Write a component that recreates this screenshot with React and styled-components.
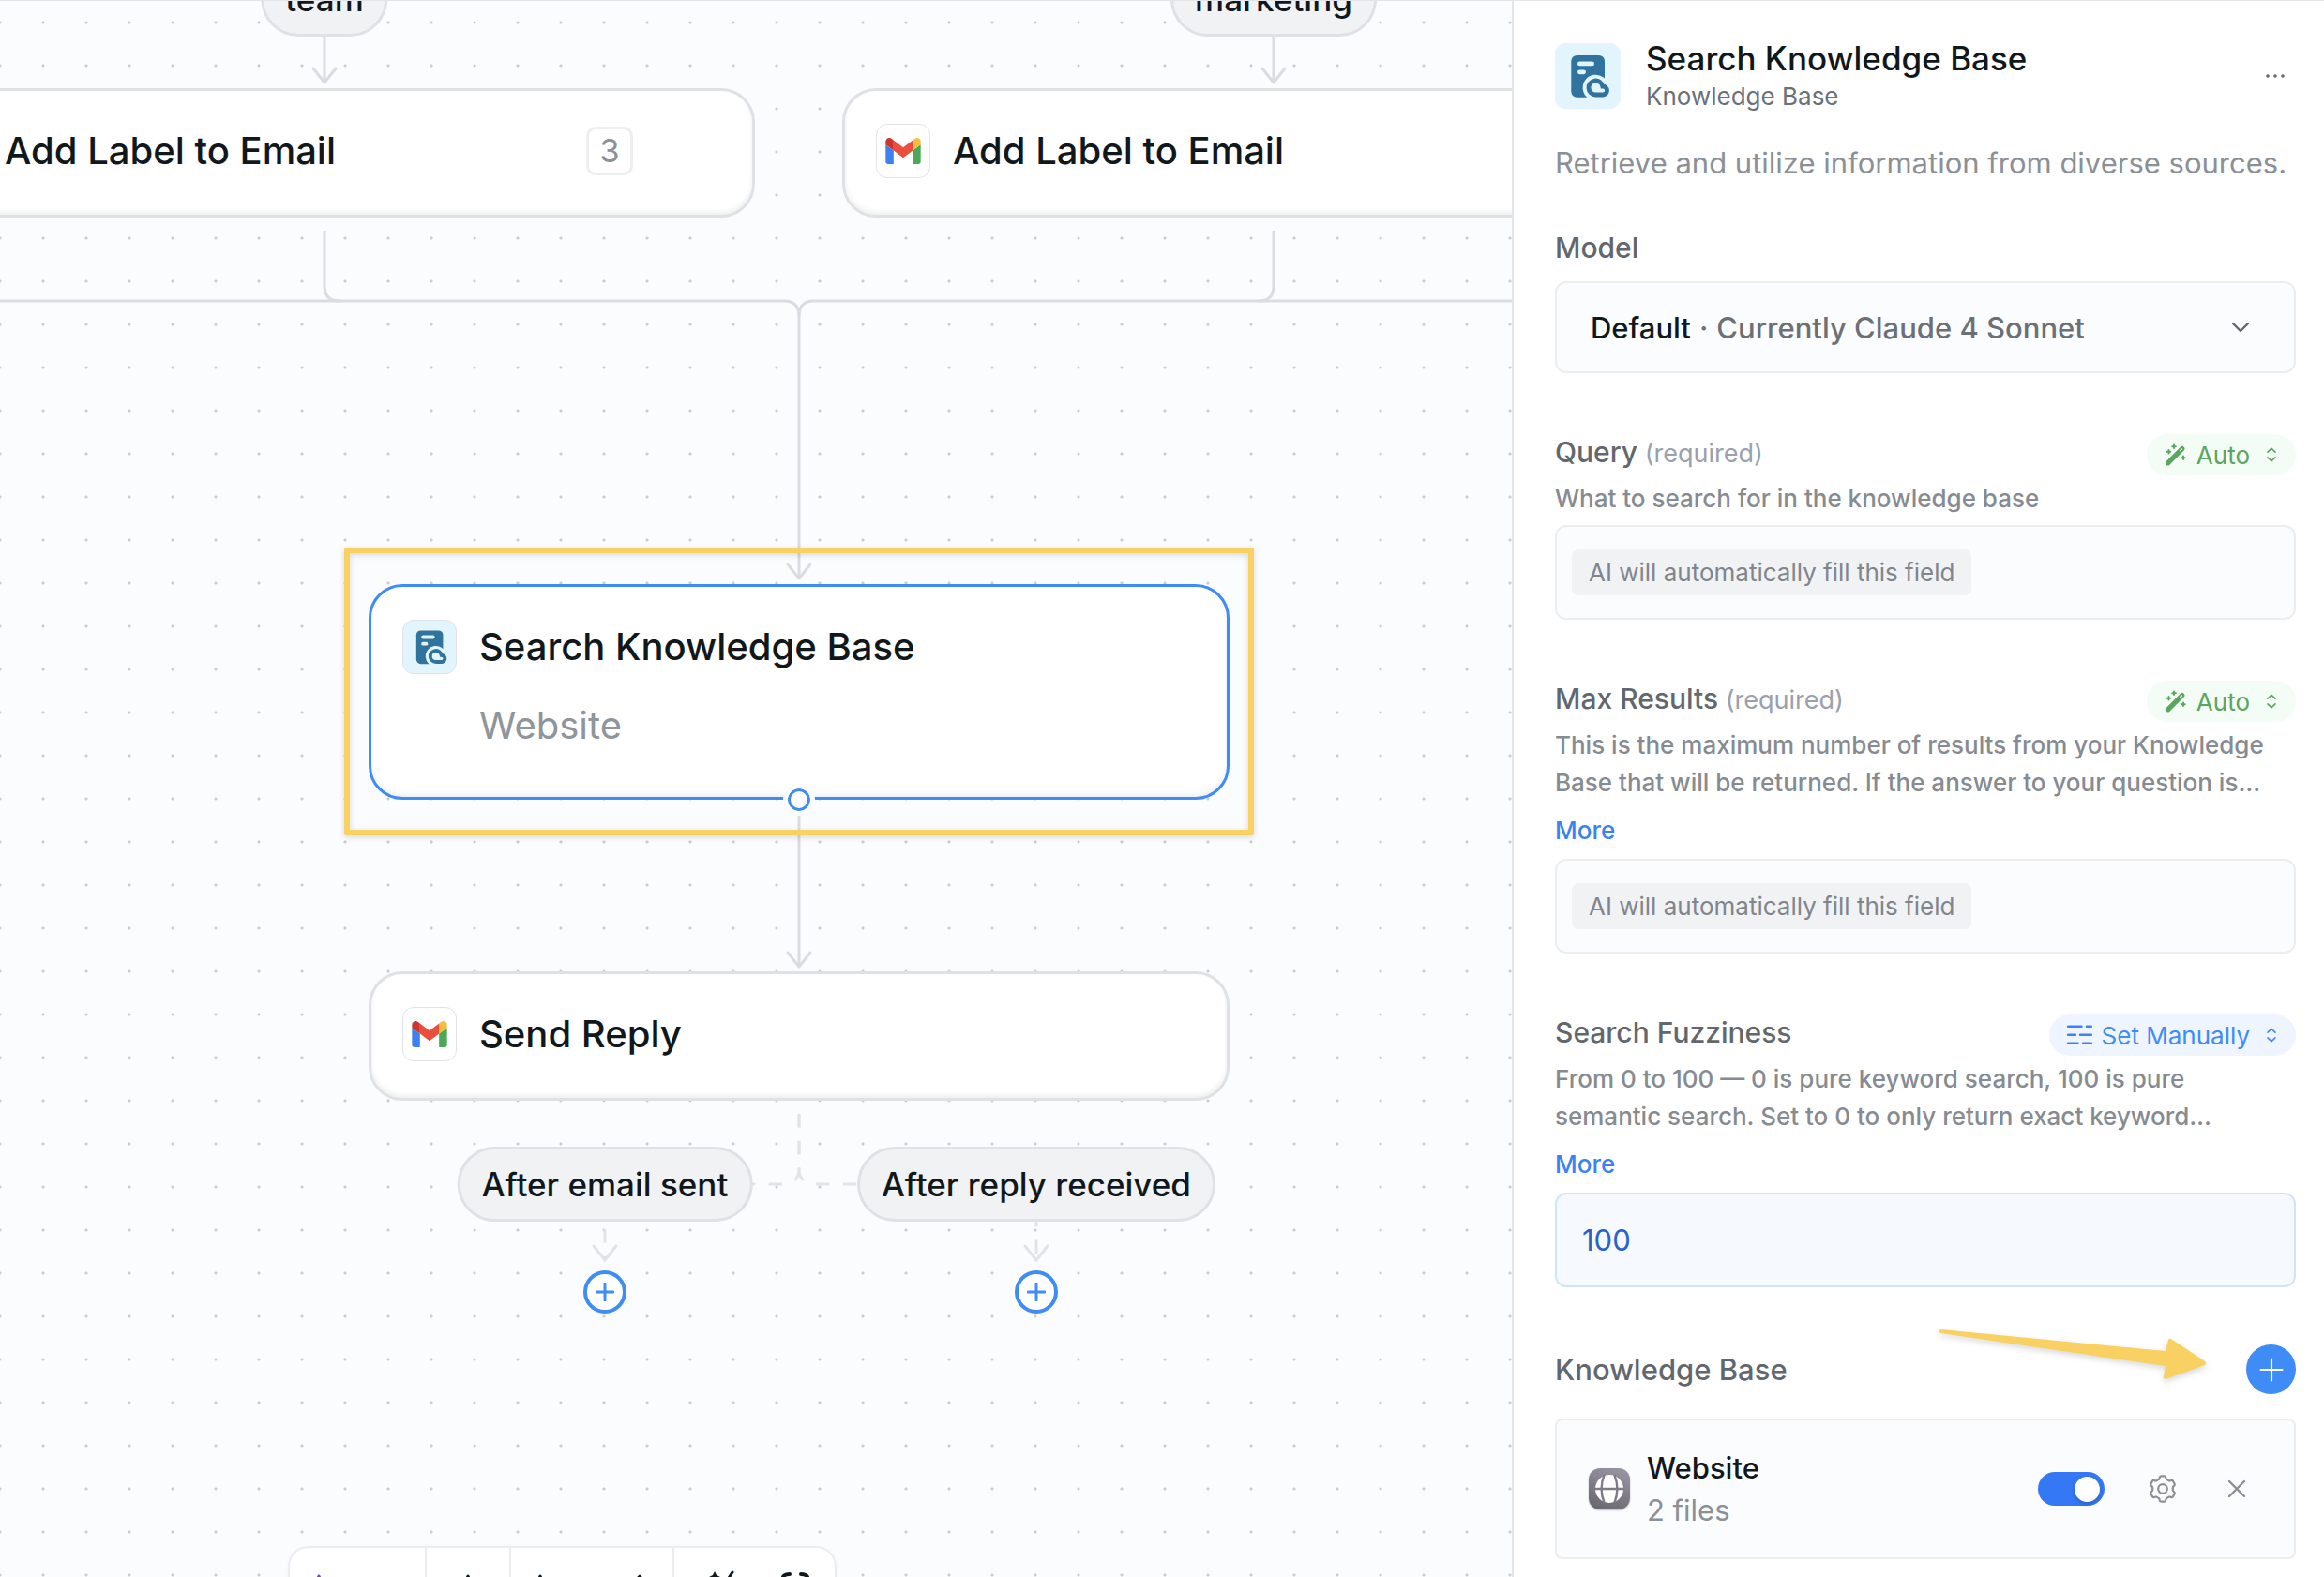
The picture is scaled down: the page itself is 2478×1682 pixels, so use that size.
import React, { useState } from 'react';
import styled, { createGlobalStyle } from 'styled-components';

const GlobalStyle = createGlobalStyle`
  * {
    box-sizing: border-box;
  }
  body {
    margin: 0;
    background: #fff;
    color: #11181c;
    font-family: Inter, "Liberation Sans", sans-serif;
  }
  button, input, select {
    font: inherit;
    color: inherit;
  }
`;

/* ---------- icons ---------- */

function GmailIcon() {
  return (
    <svg width="38" height="28" viewBox="52 42 88 66" aria-hidden="true">
      <path fill="#3b82f0" d="M58 108h14V74L52 59v43c0 3.32 2.69 6 6 6" />
      <path fill="#4aa856" d="M120 108h14c3.32 0 6-2.69 6-6V59l-20 15" />
      <path fill="#f5be41" d="M120 48v26l20-15v-8c0-7.42-8.47-11.65-14.4-7.2" />
      <path fill="#ea4f3d" d="M72 74V48l24 18 24-18v26L96 92" />
      <path fill="#cf352b" d="M52 51v8l20 15V48l-5.6-4.2c-5.94-4.45-14.4-.22-14.4 7.2" />
    </svg>
  );
}

function KnowledgeIcon({ size }) {
  const cloud = 'M43.5 55H51.2A4.5 4.5 0 0 0 50.8 46A7.5 7.5 0 1 0 43.5 55Z';
  return (
    <svg width={size} height={size} viewBox="0 0 70 70" aria-hidden="true">
      <rect x="17.3" y="13" width="35.7" height="44.7" rx="6" fill="#30739f" />
      <rect x="24" y="19.5" width="18" height="4.8" rx="2.4" fill="#e3f5fc" />
      <rect x="24" y="28.4" width="9" height="4.8" rx="2.4" fill="#e3f5fc" />
      <path d={cloud} fill="#e3f5fc" stroke="#e3f5fc" strokeWidth="12.6" />
      <path d={cloud} fill="#e3f5fc" stroke="#30739f" strokeWidth="4.8" />
    </svg>
  );
}

function WandIcon() {
  return (
    <svg width="24" height="24" viewBox="0 0 24 24" fill="none" strokeLinecap="round" aria-hidden="true">
      <path d="M3.6 20.8L18.8 5.6" stroke="#5ba561" strokeWidth="5.2" />
      <path d="M16.8 7.6L18.4 6" stroke="#f3fcf5" strokeWidth="1.4" />
      <path
        d="M4.5 6.9v3.6M2.7 8.7h3.6M10 1.5v3.6M8.2 3.3h3.6M20 13.5v3.6M18.2 15.3h3.6"
        stroke="#5ba561"
        strokeWidth="1.9"
      />
    </svg>
  );
}

function ManualIcon() {
  return (
    <svg width="27" height="22" viewBox="0 0 27 22" fill="none" aria-hidden="true">
      <path
        d="M1 1.7H15.5M21 1.7H26M1 10.8H9M14 10.8H26M1 19.8H11.5M17 19.8H26"
        stroke="#3a82f6"
        strokeWidth="2.4"
        strokeLinecap="round"
      />
    </svg>
  );
}

function SortIcon() {
  return (
    <svg width="10" height="16" viewBox="0 0 10 16" fill="none" aria-hidden="true">
      <path
        d="M1 5.2L5 1.4L9 5.2M1 10.8L5 14.6L9 10.8"
        stroke="currentColor"
        strokeWidth="1.6"
        strokeLinecap="round"
        strokeLinejoin="round"
      />
    </svg>
  );
}

function ChevronIcon() {
  return (
    <svg width="20" height="12" viewBox="0 0 20 12" fill="none" aria-hidden="true">
      <path d="M2 2L10 10L18 2" stroke="#62676e" strokeWidth="2.4" strokeLinecap="round" strokeLinejoin="round" />
    </svg>
  );
}

function PlusIcon({ size, weight }) {
  return (
    <svg width={size} height={size} viewBox="0 0 24 24" fill="none" aria-hidden="true">
      <path d="M12 1.5v21M1.5 12h21" stroke="currentColor" strokeWidth={weight} strokeLinecap="round" />
    </svg>
  );
}

function DotsIcon() {
  return (
    <svg width="24" height="8" viewBox="0 0 24 8" fill="#62676e" aria-hidden="true">
      <circle cx="4" cy="4" r="1.8" />
      <circle cx="12" cy="4" r="1.8" />
      <circle cx="20" cy="4" r="1.8" />
    </svg>
  );
}

function GlobeIcon() {
  return (
    <svg width="32" height="32" viewBox="0 0 32 32" fill="none" aria-hidden="true">
      <circle cx="16" cy="16" r="15" fill="#fff" />
      <path
        d="M0 16H32M10.6 1C6.6 11 6.6 21 10.6 31M21.4 1C25.4 11 25.4 21 21.4 31"
        stroke="#7f7b86"
        strokeWidth="2.4"
      />
    </svg>
  );
}

const gearPath = (() => {
  const at = (deg, r) => {
    const rad = (deg * Math.PI) / 180;
    return `${(15 + r * Math.cos(rad)).toFixed(2)} ${(15 + r * Math.sin(rad)).toFixed(2)}`;
  };
  let d = '';
  for (let i = 0; i < 6; i += 1) {
    const a = i * 60 - 90;
    d += `${i ? 'L' : 'M'}${at(a - 22, 10.9)}Q${at(a - 17, 11.4)} ${at(a - 15, 12.6)}`;
    d += `Q${at(a - 13, 13.8)} ${at(a - 7, 13.7)}L${at(a + 7, 13.7)}`;
    d += `Q${at(a + 13, 13.8)} ${at(a + 15, 12.6)}Q${at(a + 17, 11.4)} ${at(a + 22, 10.9)}`;
  }
  return `${d}Z`;
})();

function GearIcon() {
  return (
    <svg width="30" height="30" viewBox="0 0 30 30" fill="none" stroke="#8b9096" strokeWidth="2.2" strokeLinejoin="round" aria-hidden="true">
      <path d={gearPath} />
      <circle cx="15" cy="15" r="4.8" />
    </svg>
  );
}

function CloseIcon() {
  return (
    <svg width="20" height="20" viewBox="0 0 20 20" fill="none" aria-hidden="true">
      <path d="M2 2L18 18M18 2L2 18" stroke="#8b9096" strokeWidth="2.4" strokeLinecap="round" />
    </svg>
  );
}

function StarIcon({ color }) {
  return (
    <svg width="30" height="30" viewBox="0 0 30 30" aria-hidden="true">
      <path
        d="M15 2L19 11L28 15L19 19L15 28L11 19L2 15L11 11Z"
        fill={color}
        stroke={color}
        strokeWidth="3"
        strokeLinejoin="round"
      />
    </svg>
  );
}

function TidyIcon() {
  return (
    <svg width="34" height="34" viewBox="0 0 34 34" aria-hidden="true">
      <path d="M9 1L11 5L15 7L11 9L9 13L7 9L3 7L7 5Z" fill="#11181c" />
      <path d="M28 2L8 32" stroke="#11181c" strokeWidth="3" strokeLinecap="round" />
    </svg>
  );
}

function FitIcon() {
  return (
    <svg width="36" height="36" viewBox="0 0 36 36" fill="none" aria-hidden="true">
      <path
        d="M12 4C6 4 4 6 4 13M24 4C30 4 32 6 32 13M4 23C4 30 6 32 12 32M32 23C32 30 30 32 24 32"
        stroke="#11181c"
        strokeWidth="4"
        strokeLinecap="round"
      />
    </svg>
  );
}

/* ---------- flow canvas ---------- */

const solidEdges = [
  'M346 38V86',
  'M1358 38V86',
  'M346 245V304Q346 320 362 320',
  'M1358 245V304Q1358 320 1342 320',
  'M0 320H836Q852 320 852 336V614',
  'M1614 320H868Q852 320 852 336',
  'M852 868V1028',
];

const arrowHeads = [
  [346, 87],
  [1358, 87],
  [852, 616],
  [852, 1030],
];

const dashedEdges = [
  'M852 1187V1247A15 15 0 0 1 837 1262H660A15 15 0 0 0 645 1277V1341',
  'M852 1187V1247A15 15 0 0 0 867 1262H1090A15 15 0 0 1 1105 1277V1341',
];

const dashedHeads = [
  [645, 1343],
  [1105, 1343],
];

const headPath = ([x, y]) => `M${x - 12} ${y - 15}L${x} ${y}L${x + 12} ${y - 15}`;

function Edges() {
  return (
    <EdgeLayer aria-hidden="true">
      <g stroke="#dadce1" strokeWidth="3" fill="none" strokeLinejoin="round">
        {solidEdges.map((d) => <path key={d} d={d} />)}
        {arrowHeads.map((p) => <path key={p.join()} d={headPath(p)} strokeLinecap="round" />)}
      </g>
      <g stroke="#e1e3e6" strokeWidth="3" fill="none">
        {dashedEdges.map((d) => <path key={d} d={d} strokeDasharray="14.4 14.4" />)}
        {dashedHeads.map((p) => <path key={p.join()} d={headPath(p)} strokeLinecap="round" />)}
      </g>
    </EdgeLayer>
  );
}

function FlowNode({ x, y, title, subtitle, icon = 'gmail', count, selected }) {
  return (
    <Node $x={x} $y={y} $selected={selected}>
      <NodeIcon $tinted={icon === 'kb'}>
        {icon === 'kb' ? <KnowledgeIcon size={56} /> : <GmailIcon />}
      </NodeIcon>
      <NodeText>
        <NodeTitle>{title}</NodeTitle>
        {subtitle && <NodeSubtitle>{subtitle}</NodeSubtitle>}
      </NodeText>
      {count && <Count>{count}</Count>}
      {selected && <Handle />}
    </Node>
  );
}

function Canvas() {
  return (
    <Board>
      <Edges />
      <Branch $x={346} $y={-42}>team</Branch>
      <Branch $x={1358} $y={-42}>marketing</Branch>
      <FlowNode x={-113} y={93} title="Add Label to Email" count="3" />
      <FlowNode x={898} y={93} title="Add Label to Email" />
      <FlowNode x={393} y={622} title="Search Knowledge Base" subtitle="Website" icon="kb" selected />
      <Highlight />
      <FlowNode x={393} y={1035} title="Send Reply" />
      <Branch $x={645} $y={1222}>After email sent</Branch>
      <Branch $x={1105} $y={1222}>After reply received</Branch>
      <AddStep $x={645} aria-label="Add step after email sent"><PlusIcon size={20} weight={3.6} /></AddStep>
      <AddStep $x={1105} aria-label="Add step after reply received"><PlusIcon size={20} weight={3.6} /></AddStep>
      <Toolbar>
        <Tool $width={146} aria-label="Assistant"><StarIcon color="#7c3fc4" /></Tool>
        <Tool $width={90} $align="center" aria-label="Move up"><StarIcon color="#11181c" /></Tool>
        <Tool $width={174} $align="space-between" aria-label="Zoom level">
          <StarIcon color="#11181c" />
          <SortIcon />
        </Tool>
        <ToolPair>
          <IconButton aria-label="Tidy up"><TidyIcon /></IconButton>
          <IconButton aria-label="Fit to screen"><FitIcon /></IconButton>
        </ToolPair>
      </Toolbar>
    </Board>
  );
}

/* ---------- side panel ---------- */

function ModeSelect({ field, mode }) {
  const manual = mode === 'Set Manually';
  return (
    <ModePill $manual={manual}>
      {manual ? <ManualIcon /> : <WandIcon />}
      <PlainSelect aria-label={`${field} mode`} defaultValue={mode}>
        <option>Auto</option>
        <option>Set Manually</option>
      </PlainSelect>
      <SortIcon />
    </ModePill>
  );
}

function FieldSection({ id, label, required, mode, help, more, children }) {
  return (
    <Section>
      <FieldHead>
        <Label htmlFor={id}>
          {label}
          {required && <Required> (required)</Required>}
        </Label>
        <ModeSelect field={label} mode={mode} />
      </FieldHead>
      <FieldBody>
        <Help>{help}</Help>
        {more && <More href="#more">More</More>}
        {children}
      </FieldBody>
    </Section>
  );
}

function Panel() {
  const [fuzziness, setFuzziness] = useState('100');
  const [enabled, setEnabled] = useState(true);

  return (
    <Side>
      <PanelHead>
        <PanelIcon><KnowledgeIcon size={70} /></PanelIcon>
        <PanelTitles>
          <PanelTitle>Search Knowledge Base</PanelTitle>
          <PanelSubtitle>Knowledge Base</PanelSubtitle>
        </PanelTitles>
        <IconButton aria-label="More options"><DotsIcon /></IconButton>
      </PanelHead>
      <Intro>Retrieve and utilize information from diverse sources.</Intro>

      <ModelSection>
        <Label htmlFor="model">Model</Label>
        <ModelBox>
          <strong>Default</strong>
          <span>·</span>
          <ModelSelect id="model">
            <option>Currently Claude 4 Sonnet</option>
          </ModelSelect>
          <ChevronIcon />
        </ModelBox>
      </ModelSection>

      <FieldSection id="query" label="Query" required mode="Auto" help="What to search for in the knowledge base">
        <AutoBox><AutoInput id="query" readOnly value="AI will automatically fill this field" /></AutoBox>
      </FieldSection>

      <FieldSection
        id="max"
        label="Max Results"
        required
        mode="Auto"
        more
        help={<>This is the maximum number of results from your Knowledge<br />Base that will be returned. If the answer to your question is…</>}
      >
        <AutoBox><AutoInput id="max" readOnly value="AI will automatically fill this field" /></AutoBox>
      </FieldSection>

      <FieldSection
        id="fuzziness"
        label="Search Fuzziness"
        mode="Set Manually"
        more
        help={<>From 0 to 100 — 0 is pure keyword search, 100 is pure<br />semantic search. Set to 0 to only return exact keyword…</>}
      >
        <NumberInput id="fuzziness" value={fuzziness} onChange={(e) => setFuzziness(e.target.value)} />
      </FieldSection>

      <SourcesHead>
        <SourcesTitle>Knowledge Base</SourcesTitle>
        <AddSource aria-label="Add knowledge base"><PlusIcon size={26} weight={2} /></AddSource>
        <Pointer viewBox="0 0 300 70" aria-hidden="true">
          <path
            d="M9 8L249 31L252 19Q253 17 255 18L291 42Q293 44 291 46L249 61Q246 61 247 58L249 47L9 12Q6 10 9 8Z"
            fill="#f8d162"
          />
        </Pointer>
      </SourcesHead>
      <Source>
        <SourceIcon><GlobeIcon /></SourceIcon>
        <SourceText>
          <SourceName htmlFor="website">Website</SourceName>
          <SourceMeta>2 files</SourceMeta>
        </SourceText>
        <Switch
          id="website"
          type="checkbox"
          role="switch"
          checked={enabled}
          onChange={(e) => setEnabled(e.target.checked)}
        />
        <SourceAction aria-label="Website settings"><GearIcon /></SourceAction>
        <SourceAction aria-label="Remove Website"><CloseIcon /></SourceAction>
      </Source>
    </Side>
  );
}

export default function App() {
  return (
    <Page>
      <GlobalStyle />
      <Canvas />
      <Panel />
    </Page>
  );
}

const Page = styled.div`
  display: flex;
  min-height: 100vh;
  border-top: 1px solid #e2e4e8;
`;

const Board = styled.main`
  position: relative;
  flex: 1;
  min-width: 0;
  overflow: hidden;
  background-color: #fbfcfe;
  background-image: radial-gradient(circle, #c9ccd1 1px, transparent 2px);
  background-size: 46px 46px;
  background-position: -23px 0;
`;

const EdgeLayer = styled.svg`
  position: absolute;
  inset: 0;
  width: 100%;
  height: 100%;
`;

const Node = styled.article`
  position: absolute;
  left: ${(p) => p.$x}px;
  top: ${(p) => p.$y}px;
  width: 918px;
  display: flex;
  align-items: flex-start;
  gap: 24px;
  padding: ${(p) => (p.$selected ? '34px 33px 46px' : '34px 33px 38px')};
  border: 3px solid ${(p) => (p.$selected ? '#3f8cf5' : '#dfe1e5')};
  border-radius: 36px;
  background: #fff;
  box-shadow: inset 0 -3px 5px rgba(17, 24, 28, 0.07);
`;

const NodeIcon = styled.div`
  display: grid;
  place-items: center;
  flex: none;
  width: 58px;
  height: 58px;
  margin: 1px 0;
  border: 1px solid #e0e3e7;
  border-radius: 12px;
  background: ${(p) => (p.$tinted ? '#e3f5fc' : '#fff')};
  overflow: hidden;
`;

const NodeText = styled.div`
  flex: 1;
`;

const NodeTitle = styled.h2`
  margin: 0;
  font-size: 40px;
  line-height: 60px;
  font-weight: 500;
`;

const NodeSubtitle = styled.p`
  margin: 24px 0 0;
  font-size: 40px;
  line-height: 60px;
  color: #8f959c;
`;

const Count = styled.span`
  width: 50px;
  margin: 4px 94px 4px 0;
  border: 3px solid #edeef0;
  border-radius: 10px;
  font-size: 34px;
  line-height: 46px;
  text-align: center;
  color: #8b8f97;
`;

const Handle = styled.span`
  position: absolute;
  left: 50%;
  bottom: -20px;
  width: 34px;
  height: 34px;
  margin-left: -17px;
  border: 5px solid #fbfcfe;
  border-radius: 50%;
  background: #fff;
  box-shadow: inset 0 0 0 3px #3f8cf5;
`;

const Highlight = styled.div`
  position: absolute;
  left: 367px;
  top: 583px;
  width: 970px;
  height: 307px;
  border: 6px solid #f8d162;
  border-radius: 2px;
  filter: drop-shadow(0 2px 3px rgba(0, 0, 0, 0.15));
  pointer-events: none;
`;

const Branch = styled.div`
  position: absolute;
  left: ${(p) => p.$x}px;
  top: ${(p) => p.$y}px;
  transform: translateX(-50%);
  padding: 0 23px;
  border: 3px solid #dfe1e4;
  border-radius: 40px;
  background: #f1f2f4;
  font-size: 35px;
  line-height: 74px;
  font-weight: 500;
  white-space: nowrap;
`;

const AddStep = styled.button`
  position: absolute;
  left: ${(p) => p.$x}px;
  top: 1354px;
  transform: translateX(-50%);
  display: grid;
  place-items: center;
  width: 46px;
  height: 46px;
  padding: 0;
  border: 4px solid #3f8cf5;
  border-radius: 50%;
  background: #fff;
  color: #3f8cf5;
`;

const Toolbar = styled.div`
  position: absolute;
  left: 307px;
  bottom: -35px;
  display: flex;
  height: 68px;
  border: 2px solid #ebecef;
  border-radius: 22px;
  background: #fff;
  box-shadow: 0 1px 4px rgba(17, 24, 28, 0.04);
`;

const Tool = styled.button`
  display: flex;
  align-items: flex-start;
  justify-content: ${(p) => p.$align || 'flex-start'};
  width: ${(p) => p.$width}px;
  padding: 28px 30px 0 16px;
  padding-right: ${(p) => (p.$align === 'center' ? 16 : 30)}px;
  border: 0;
  border-right: 2px solid #ebecef;
  background: none;
`;

const ToolPair = styled.div`
  display: flex;
  align-items: flex-start;
  gap: 43px;
  padding: 24px 24px 0 34px;
`;

const IconButton = styled.button`
  display: grid;
  place-items: center;
  padding: 0;
  border: 0;
  background: none;
`;

const Side = styled.aside`
  flex: 0 0 866px;
  padding: 39px 30px 0 44px;
  border-left: 2px solid #e4e6ea;
  background: #fff;
`;

const PanelHead = styled.header`
  display: flex;
  align-items: center;
  gap: 27px;
  padding-right: 10px;
`;

const PanelIcon = styled.div`
  width: 70px;
  height: 70px;
  border-radius: 11px;
  background: #e3f5fc;
`;

const PanelTitles = styled.div`
  flex: 1;
`;

const PanelTitle = styled.h1`
  margin: 0;
  font-size: 35px;
  line-height: 44px;
  font-weight: 500;
`;

const PanelSubtitle = styled.p`
  margin: 0;
  font-size: 26px;
  line-height: 38px;
  color: #6b7077;
`;

const Intro = styled.p`
  margin: 32px 0 0;
  font-size: 31px;
  line-height: 40px;
  color: #8b9097;
  white-space: nowrap;
`;

const ModelSection = styled.section`
  display: flex;
  flex-direction: column;
  gap: 17px;
  margin-top: 51px;
`;

const Section = styled.section`
  margin-top: 65px;
`;

const Label = styled.label`
  font-size: 30px;
  line-height: 38px;
  font-weight: 500;
  color: #62676e;
`;

const Required = styled.span`
  font-size: 27px;
  font-weight: 400;
  color: #9aa0ad;
`;

const Box = styled.div`
  display: flex;
  align-items: center;
  border: 2px solid #ecedef;
  border-radius: 12px;
  background: #fbfcfe;
`;

const ModelBox = styled(Box)`
  gap: 9px;
  height: 98px;
  padding: 0 47px 0 36px;
  font-size: 31px;
  font-weight: 500;
  color: #6b7077;

  strong {
    font-weight: 500;
    color: #11181c;
  }
`;

const PlainSelect = styled.select`
  appearance: none;
  field-sizing: content;
  padding: 0;
  border: 0;
  background: none;
  outline: none;
`;

const ModelSelect = styled(PlainSelect)`
  flex: 1;
`;

const FieldHead = styled.div`
  display: flex;
  align-items: flex-start;
  justify-content: space-between;
`;

const ModePill = styled.div`
  display: flex;
  align-items: center;
  gap: 10px;
  height: 44px;
  padding: 0 21px 0 19px;
  border-radius: 22px;
  background: ${(p) => (p.$manual ? '#eef5fe' : '#f3fcf5')};
  color: ${(p) => (p.$manual ? '#3f8cf5' : '#5ba561')};
  font-size: 26px;

  select {
    margin-right: 8px;
  }
`;

const FieldBody = styled.div`
  display: flex;
  flex-direction: column;
  align-items: flex-start;
  gap: 8px;
  margin-top: 5px;
`;

const Help = styled.p`
  margin: 0;
  font-size: 26px;
  line-height: 40px;
  font-weight: 500;
  color: #868b92;
  white-space: nowrap;
`;

const More = styled.a`
  font-size: 26px;
  line-height: 45px;
  font-weight: 500;
  color: #3b82ee;
  text-decoration: none;
`;

const AutoBox = styled(Box)`
  width: 100%;
  height: 101px;
  padding: 0 16px;
`;

const AutoInput = styled.input`
  field-sizing: content;
  height: 49px;
  padding: 0 18px;
  border: 0;
  border-radius: 7px;
  background: #f1f2f4;
  font-size: 26px;
  color: #80858c;
  outline: none;
`;

const NumberInput = styled.input`
  width: 100%;
  height: 101px;
  padding: 0 27px;
  border: 2px solid #d2e4fa;
  border-radius: 12px;
  background: #f6f9fe;
  font-size: 31px;
  color: #2763c9;
  outline: none;
`;

const SourcesHead = styled.div`
  position: relative;
  display: flex;
  align-items: center;
  justify-content: space-between;
  margin-top: 61px;
`;

const SourcesTitle = styled.h3`
  margin: 0;
  font-size: 31px;
  line-height: 38px;
  font-weight: 500;
  color: #62676e;
`;

const AddSource = styled.button`
  display: grid;
  place-items: center;
  width: 53px;
  height: 53px;
  padding: 0;
  border: 0;
  border-radius: 50%;
  background: #3f8cf7;
  color: #fff;
`;

/* hand-drawn pointer that lies over the heading row */
const Pointer = styled.svg`
  position: absolute;
  right: 88px;
  top: -24px;
  width: 300px;
  height: 70px;
  filter: drop-shadow(0 3px 3px rgba(0, 0, 0, 0.15));
  pointer-events: none;
`;

const Source = styled(Box)`
  height: 150px;
  margin-top: 26px;
  padding: 0 40px 0 34px;
  border-radius: 8px;
`;

const SourceIcon = styled.div`
  display: grid;
  place-items: center;
  width: 44px;
  height: 44px;
  border-radius: 12px;
  background: linear-gradient(200deg, #9c97a6, #66646b);
  box-shadow: 0 1px 2px rgba(0, 0, 0, 0.25);
`;

const SourceText = styled.div`
  flex: 1;
  display: flex;
  flex-direction: column;
  margin-left: 18px;
  font-size: 31px;
  line-height: 45px;
`;

const SourceName = styled.label`
  font-weight: 500;
`;

const SourceMeta = styled.span`
  color: #8b9097;
`;

const Switch = styled.input`
  appearance: none;
  display: flex;
  align-items: center;
  width: 71px;
  height: 36px;
  margin: 0 37px 0 0;
  padding: 0 5px;
  border-radius: 18px;
  background: #c9ccd1;

  &::before {
    content: "";
    width: 27px;
    height: 27px;
    border-radius: 50%;
    background: #fff;
    box-shadow: 0 2px 4px rgba(0, 0, 0, 0.2);
  }

  &:checked {
    justify-content: flex-end;
    background: #3478f6;
  }
`;

const SourceAction = styled(IconButton)`
  width: 50px;
  height: 50px;

  & + & {
    margin-left: 29px;
    margin-right: -4px;
  }
`;
